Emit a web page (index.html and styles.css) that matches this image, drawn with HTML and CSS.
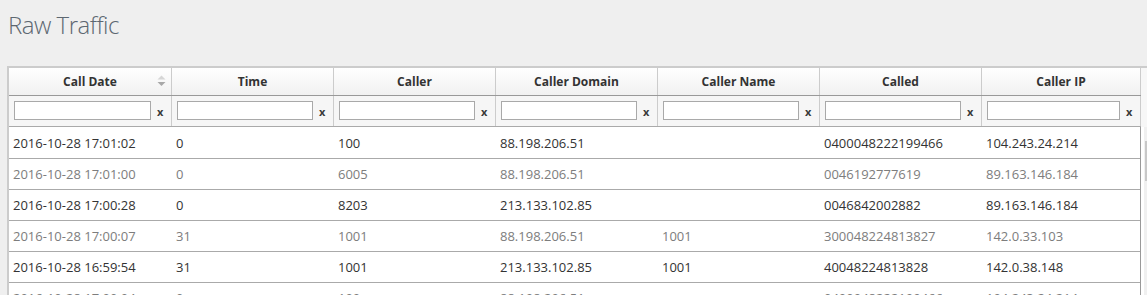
FILE: index.html
```html
<!DOCTYPE html>
<html>
<head>
<meta charset="utf-8">
<link rel="stylesheet" href="styles.css">
</head>
<body>
<h1 class="title">Raw Traffic</h1>
<div class="grid-wrap">
  <div class="main">
    <div class="row head">
      <div class="th sortable">Call Date
        <svg class="sort" width="9" height="12" viewBox="0 0 9 12"><path d="M4.5 0.5 L8.5 4.5 L0.5 4.5 Z" fill="#d6d6d6"/><path d="M0.5 7 L8.5 7 L4.5 11 Z" fill="#a8a8a8"/></svg>
      </div>
      <div class="th">Time</div>
      <div class="th">Caller</div>
      <div class="th">Caller Domain</div>
      <div class="th">Caller Name</div>
      <div class="th">Called</div>
      <div class="th">Caller IP</div>
    </div>
    <div class="row filters">
      <div class="fc"><input class="fi" type="text"><span class="clr">x</span></div>
      <div class="fc"><input class="fi" type="text"><span class="clr">x</span></div>
      <div class="fc"><input class="fi" type="text"><span class="clr">x</span></div>
      <div class="fc"><input class="fi" type="text"><span class="clr">x</span></div>
      <div class="fc"><input class="fi" type="text"><span class="clr">x</span></div>
      <div class="fc"><input class="fi" type="text"><span class="clr">x</span></div>
      <div class="fc"><input class="fi" type="text"><span class="clr">x</span></div>
    </div>
    <div class="tbody">
      <div class="row tr dark"><div class="td">2016-10-28 17:01:02</div><div class="td">0</div><div class="td">100</div><div class="td">88.198.206.51</div><div class="td"></div><div class="td">0400048222199466</div><div class="td">104.243.24.214</div></div>
      <div class="row tr light"><div class="td">2016-10-28 17:01:00</div><div class="td">0</div><div class="td">6005</div><div class="td">88.198.206.51</div><div class="td"></div><div class="td">0046192777619</div><div class="td">89.163.146.184</div></div>
      <div class="row tr dark"><div class="td">2016-10-28 17:00:28</div><div class="td">0</div><div class="td">8203</div><div class="td">213.133.102.85</div><div class="td"></div><div class="td">0046842002882</div><div class="td">89.163.146.184</div></div>
      <div class="row tr light"><div class="td">2016-10-28 17:00:07</div><div class="td">31</div><div class="td">1001</div><div class="td">88.198.206.51</div><div class="td">1001</div><div class="td">300048224813827</div><div class="td">142.0.33.103</div></div>
      <div class="row tr dark"><div class="td">2016-10-28 16:59:54</div><div class="td">31</div><div class="td">1001</div><div class="td">213.133.102.85</div><div class="td">1001</div><div class="td">40048224813828</div><div class="td">142.0.38.148</div></div>
      <div class="row tr light"><div class="td">2016-10-28 17:00:04</div><div class="td">0</div><div class="td">100</div><div class="td">88.198.206.51</div><div class="td"></div><div class="td">0400048222199466</div><div class="td">104.243.24.214</div></div>
    </div>
  </div>
  <div class="gutter">
    <div class="gutter-head"></div>
    <div class="gutter-body"><div class="track"><div class="thumb"></div></div></div>
  </div>
</div>
</body>
</html>
```

FILE: styles.css
```css
html, body {
  margin: 0;
  padding: 0;
  overflow: hidden;
}
body {
  background: #efefef;
  font-family: "Open Sans", "DejaVu Sans", sans-serif;
  width: 1147px;
  height: 295px;
}
.title {
  margin: 9px 0 0 8px;
  font-size: 24px;
  line-height: 32px;
  font-weight: 300;
  color: #5d6771;
  letter-spacing: -0.5px;
}
.grid-wrap {
  margin: 25px 0 0 7px;
  border-top: 2px solid #cccccc;
  border-left: 2px solid #cccccc;
  display: flex;
  width: 1170px;
}
.main {
  width: 1132px;
  flex: none;
}
.row {
  display: grid;
  grid-template-columns: 163px 162px 162px 162px 162px 162px 159px;
}
.head {
  height: 28px;
  background: linear-gradient(#ffffff, #f1f1f1);
  border-bottom: 1px solid #999999;
  box-sizing: border-box;
}
.th {
  border-right: 1px solid #cccccc;
  display: flex;
  align-items: center;
  justify-content: center;
  font-size: 12px;
  font-weight: 700;
  color: #333333;
  position: relative;
  padding-bottom: 1px;
}
.sort {
  position: absolute;
  right: 5px;
  top: 7px;
}
.filters {
  height: 31px;
  background: #f6f6f6;
  border-bottom: 1px solid #aaaaaa;
  box-sizing: border-box;
}
.fc {
  border-right: 1px solid #cccccc;
  display: flex;
  align-items: center;
  padding-left: 5px;
  padding-bottom: 1px;
}
.fi {
  box-sizing: border-box;
  width: calc(100% - 20px);
  height: 19px;
  border: 1px solid #a9a9a9;
  background: #ffffff;
  margin: 0;
  padding: 0 2px;
  font-family: inherit;
  font-size: 12px;
}
.clr {
  margin-left: 6px;
  font-size: 11px;
  font-weight: 700;
  color: #3a3a3a;
  line-height: 1;
  padding-top: 1px;
}
.tbody {
  background: #ffffff;
  padding-top: 1px;
  border-right: 1px solid #999999;
}
.tr {
  grid-template-columns: 163px 162px 162px 162px 162px 162px 158px;
  height: 31px;
  border-bottom: 1px solid #aaaaaa;
  box-sizing: border-box;
}
.td {
  font-size: 13px;
  padding-left: 4px;
  display: flex;
  align-items: center;
  white-space: nowrap;
  overflow: hidden;
}
.dark .td { color: #333333; }
.light .td { color: #7d7d7d; }
.gutter {
  flex: none;
  width: 30px;
  display: flex;
  flex-direction: column;
}
.gutter-head {
  height: 59px;
  background: #f7f7f7;
}
.gutter-body {
  flex: 1;
  background: #ffffff;
  padding-left: 3px;
  display: flex;
}
.track {
  flex: 1;
  background: #f0f0f0;
  position: relative;
}
.thumb {
  position: absolute;
  left: 1px;
  top: 14px;
  width: 12px;
  height: 40px;
  background: #c8c8c8;
}
```
